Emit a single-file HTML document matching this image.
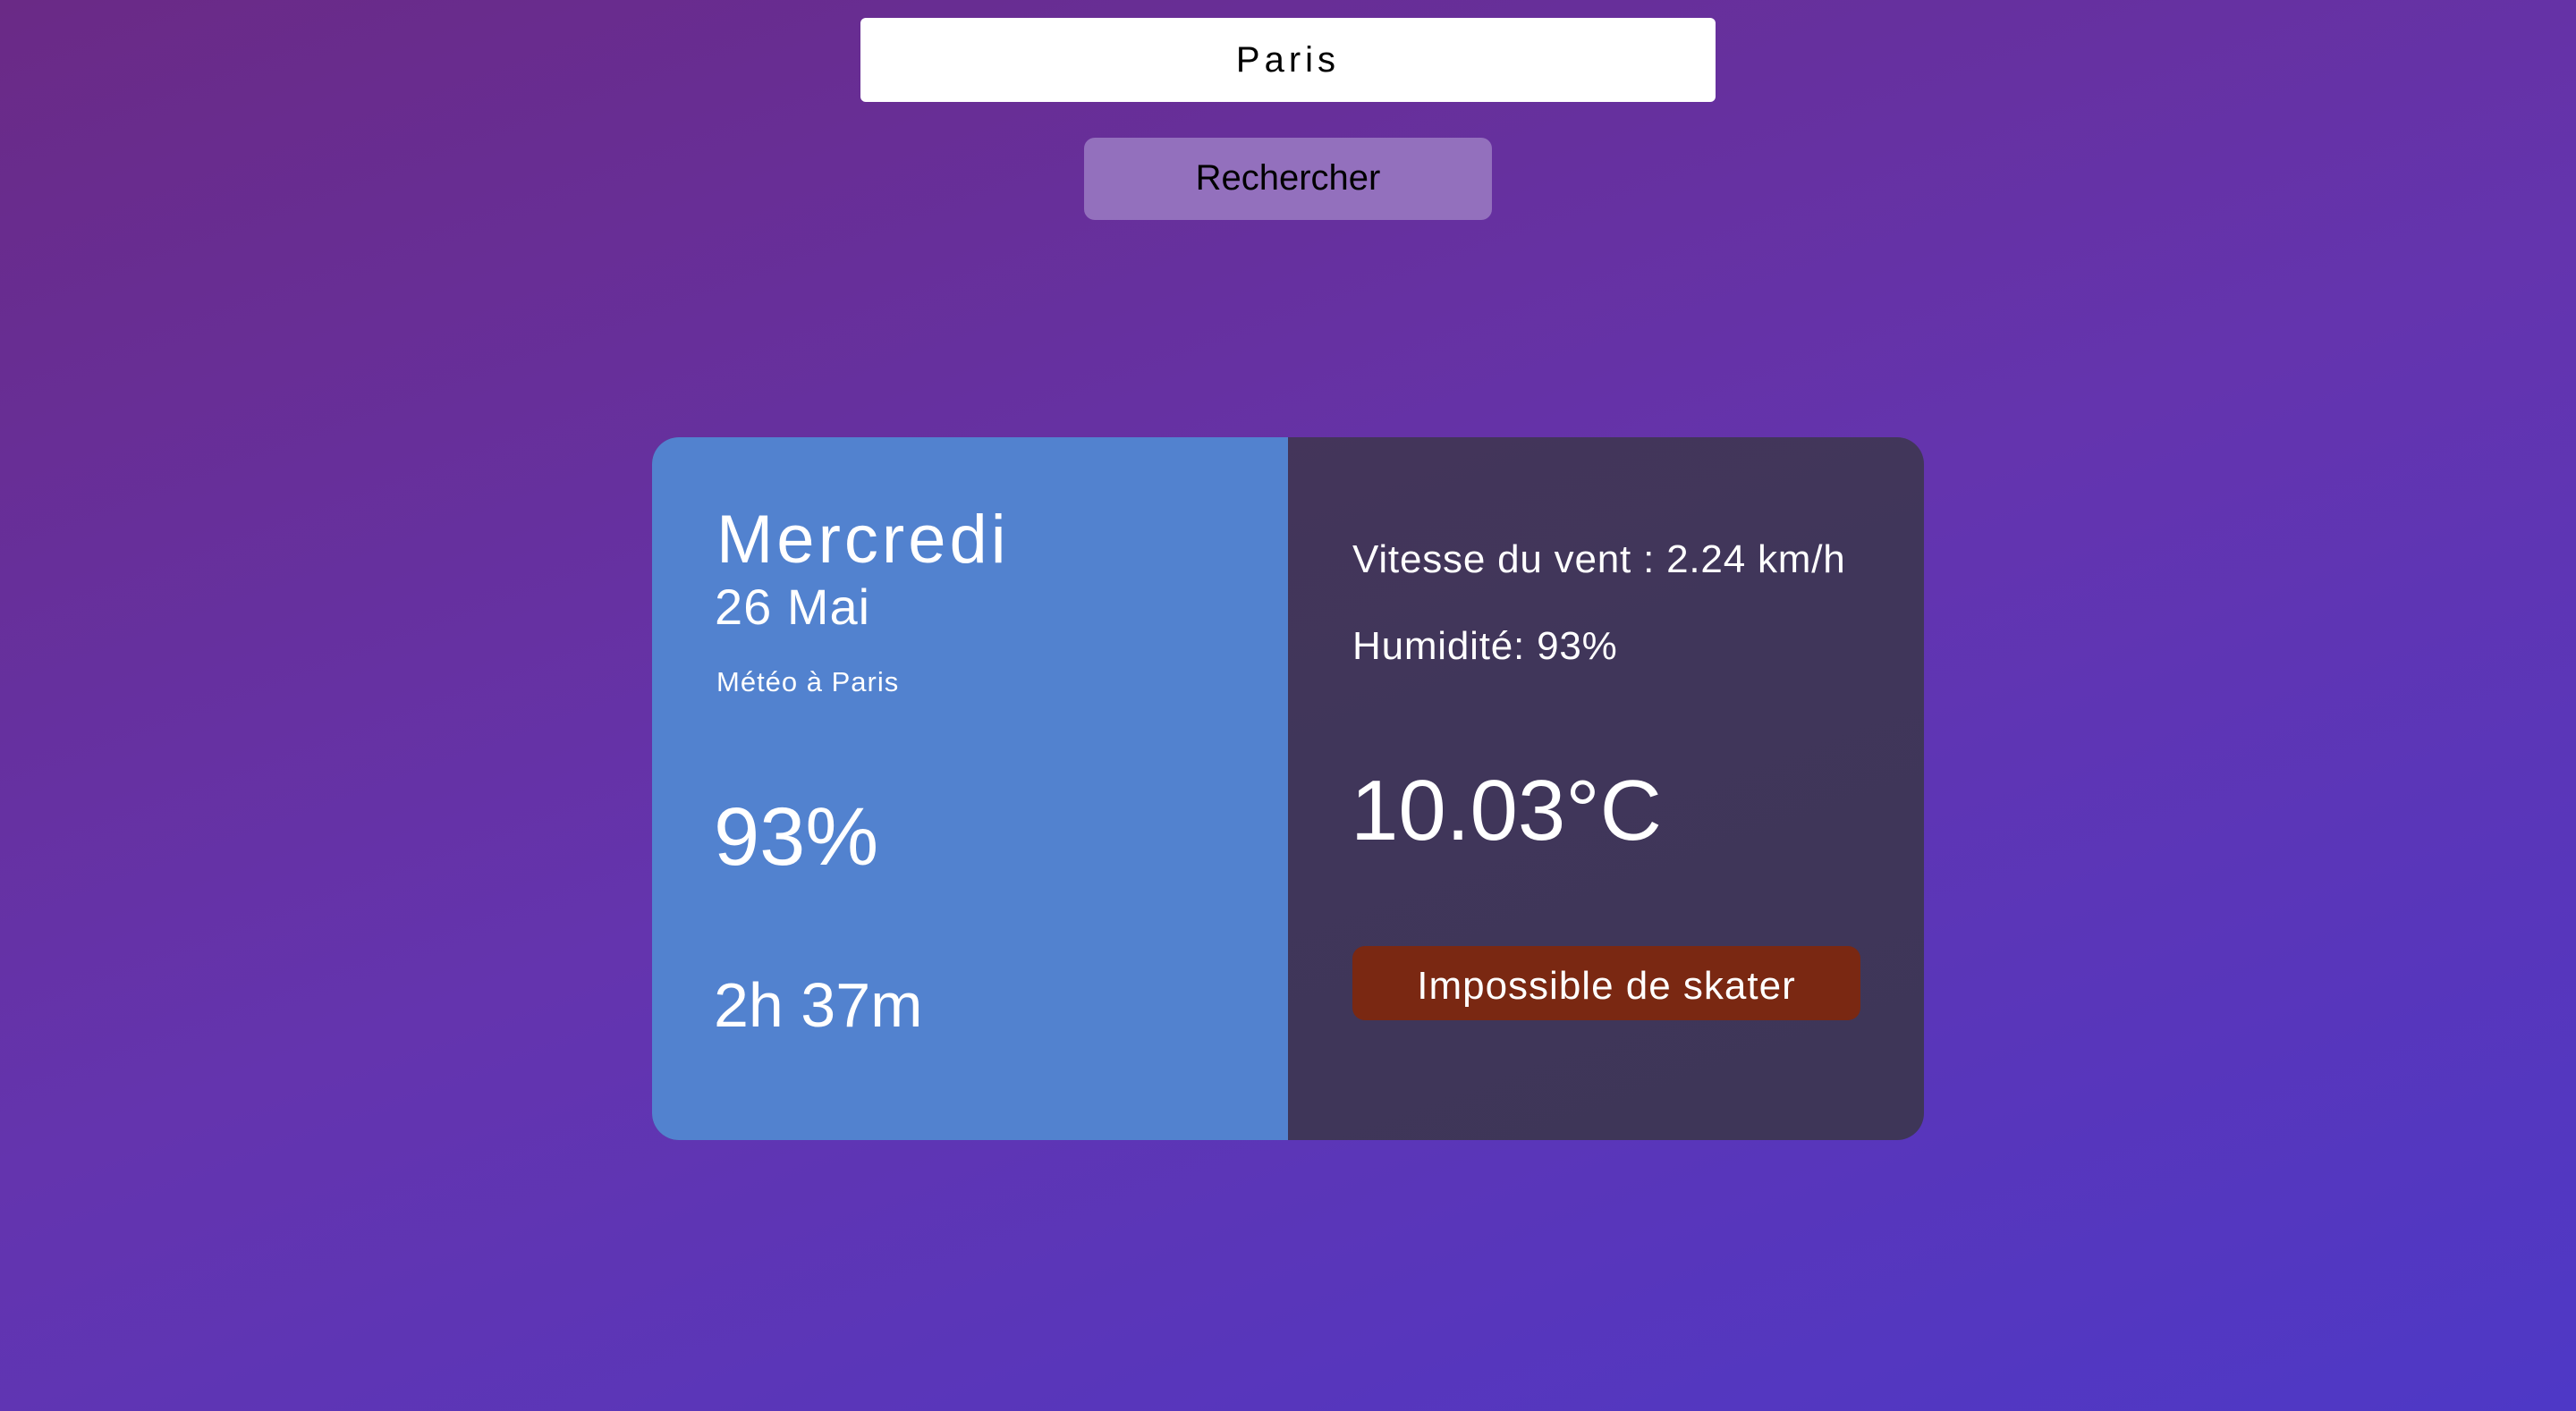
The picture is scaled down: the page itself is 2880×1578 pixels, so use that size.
<!DOCTYPE html>
<html><head><meta charset="utf-8"><style>
html,body{margin:0;padding:0}
body{width:2880px;height:1578px;position:relative;overflow:hidden;font-family:"Liberation Sans",sans-serif;background:linear-gradient(160deg,#6a2a86 0%,#6434ae 50%,#4e38c6 100%)}
.a{position:absolute;white-space:nowrap;line-height:1;color:#fff}
</style></head><body>
<div style="position:absolute;left:962px;top:20px;width:956px;height:94px;background:#fff;border-radius:6px"></div>
<div class="a" style="left:962px;width:956px;text-align:center;top:47px;font-size:40px;color:#000;letter-spacing:5px">Paris</div>
<div style="position:absolute;left:1212px;top:154px;width:456px;height:92px;background:#9370bd;border-radius:12px"></div>
<div class="a" style="left:1212px;width:456px;text-align:center;top:179px;font-size:40px;color:#000">Rechercher</div>
<div style="position:absolute;left:729px;top:489px;width:1422px;height:786px;border-radius:30px;overflow:hidden;background:linear-gradient(160deg,#46345a 0%,#40365a 50%,#3e3658 100%)">
<div style="position:absolute;left:0;top:0;width:711px;height:786px;background:#5282cf"></div>
</div>
<div class="a" style="left:801px;top:566px;font-size:76px;letter-spacing:4px">Mercredi</div>
<div class="a" style="left:799px;top:651px;font-size:56px;letter-spacing:1px">26 Mai</div>
<div class="a" style="left:801px;top:747px;font-size:31px;letter-spacing:1px">Météo à Paris</div>
<div class="a" style="left:798px;top:890px;font-size:92px">93%</div>
<div class="a" style="left:798px;top:1089px;font-size:70px">2h 37m</div>
<div class="a" style="left:1512px;top:604px;font-size:44px;letter-spacing:0.8px">Vitesse du vent : 2.24 km/h</div>
<div class="a" style="left:1512px;top:701px;font-size:44px;letter-spacing:0.8px">Humidité: 93%</div>
<div class="a" style="left:1510px;top:859px;font-size:96px">10.03°C</div>
<div style="position:absolute;left:1512px;top:1058px;width:568px;height:83px;background:#7a2812;border-radius:14px"></div>
<div class="a" style="left:1512px;width:568px;text-align:center;top:1081px;font-size:44px;letter-spacing:1px">Impossible de skater</div>
</body></html>
